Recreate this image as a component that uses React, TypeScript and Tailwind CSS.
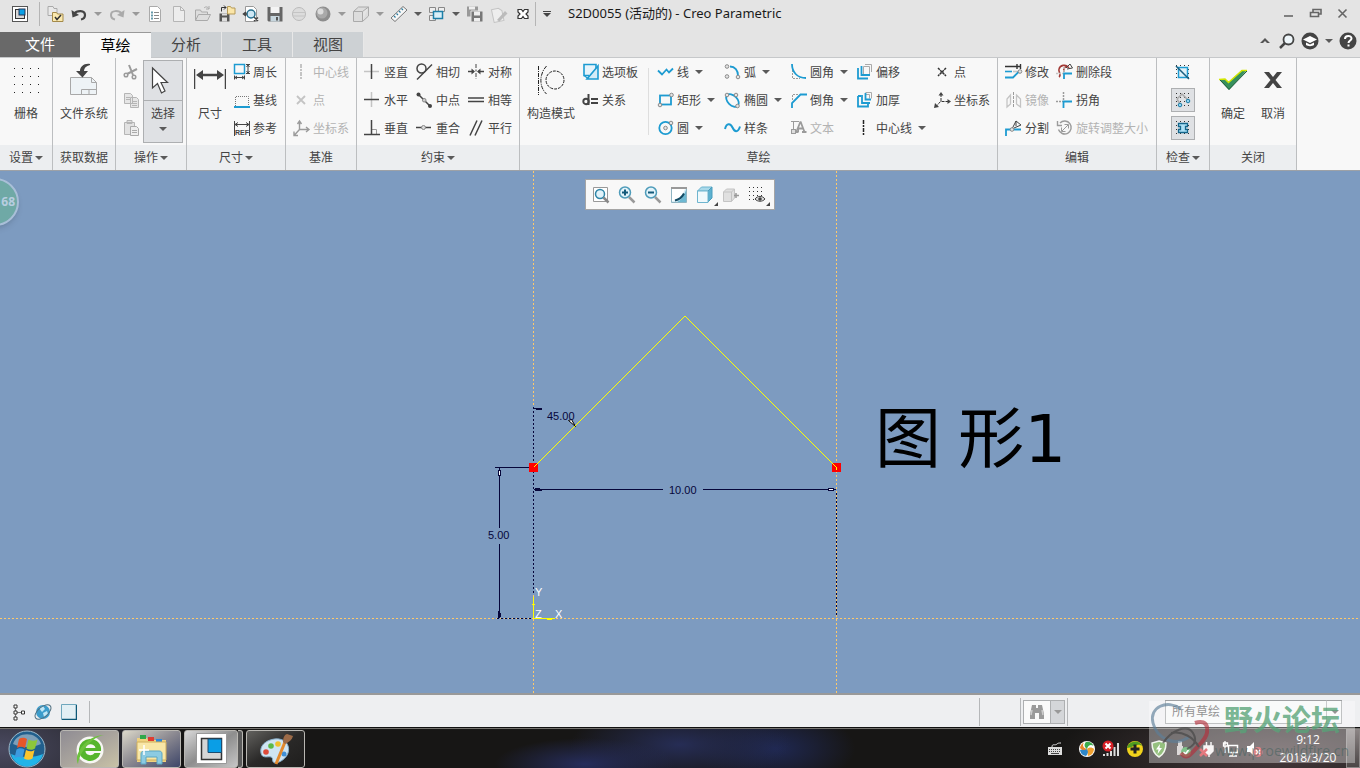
import { useState, type ReactNode } from 'react'
import clsx from 'clsx'

const BLUE = '#1d9bd1'
const DARK = '#444444'
const GRAY = '#9b9b9b'
const PALE = '#c4c4c4'

function Svg({ size = 18, h, children }: { size?: number; h?: number; children: ReactNode }) {
  return (
    <svg
      width={size}
      height={h ?? size}
      viewBox={`0 0 ${size} ${h ?? size}`}
      fill="none"
      className="shrink-0"
      aria-hidden="true"
    >
      {children}
    </svg>
  )
}

function Caret({ color = '#5a5a5a' }: { color?: string }) {
  return (
    <svg width="8" height="4" viewBox="0 0 8 4" className="shrink-0" aria-hidden="true">
      <path d="M0 0h8L4 4z" fill={color} />
    </svg>
  )
}

/* ---------- 18px ribbon icons ---------- */

const node = (x: number, y: number) => (
  <circle key={`${x}-${y}`} cx={x} cy={y} r="1.8" fill="#e4e4e4" stroke="#8a8a8a" />
)

const icons: Record<string, ReactNode> = {
  perimeter: (
    <>
      <rect x="1.5" y="1.5" width="10" height="9" stroke={BLUE} strokeWidth="1.5" />
      <path d="M13 1.5h4M13 10.5h4M15 2v8M13.5 4L15 2l1.5 2M13.5 8l1.5 2 1.5-2" stroke={DARK} />
      <path d="M1.5 12.5v4M11.5 12.5v4M2 14.5h9M4 13l-2 1.5L4 16M9 13l2 1.5L9 16" stroke={DARK} />
    </>
  ),
  baseline: (
    <>
      <path d="M2.5 15V5.5h13V15" stroke="#777" strokeDasharray="1 1" />
      <path d="M1 16h16" stroke={BLUE} strokeWidth="2" />
    </>
  ),
  ref: (
    <>
      <path d="M1.5 2v15M16.5 2v15M2 5.5h14M5 3.5l-3 2 3 2M13 3.5l3 2-3 2" stroke={DARK} />
      <text x="9" y="16" textAnchor="middle" fontSize="7" fontWeight="700" fill={DARK} fontFamily="Liberation Sans, sans-serif">
        REF
      </text>
    </>
  ),
  centerDisabled: <path d="M8 1v16" stroke={PALE} strokeWidth="2" strokeDasharray="4 1 2 1" />,
  pointDisabled: <path d="M4 5l8 8M12 5l-8 8" stroke={PALE} strokeWidth="1.8" />,
  csysDisabled: (
    <path d="M6.5 2v8.5h9M6.5 10.5L1.5 16M4.5 5l2-3 2 3M13 8l3 2.5-3 2.5M1 12.5v4h4" stroke={GRAY} strokeWidth="1.4" />
  ),
  vertical: (
    <>
      <path d="M0 8.5h15" stroke={PALE} strokeWidth="1.5" />
      <path d="M7.5 1v15" stroke={DARK} strokeWidth="1.5" />
    </>
  ),
  horizontal: (
    <>
      <path d="M7.5 1v15" stroke={PALE} strokeWidth="1.5" />
      <path d="M0 8.5h15" stroke={DARK} strokeWidth="1.5" />
    </>
  ),
  perpendicular: (
    <>
      <path d="M8 10.5h4.5V15" stroke={GRAY} />
      <path d="M7.5 1v14M0 15.5h16" stroke={DARK} strokeWidth="1.5" />
    </>
  ),
  tangent: (
    <>
      <circle cx="5.5" cy="5.5" r="4.5" stroke={DARK} strokeWidth="1.5" />
      <path d="M1 16.5l15-15" stroke={DARK} strokeWidth="1.5" />
    </>
  ),
  midpoint: (
    <>
      <path d="M2 3l12 12" stroke={DARK} strokeWidth="1.5" />
      <circle cx="2.5" cy="3.5" r="2" fill={DARK} />
      <circle cx="14" cy="15" r="2" fill={DARK} />
      <circle cx="8.2" cy="9.2" r="1.8" fill="#ccc" stroke="#888" />
    </>
  ),
  coincident: (
    <>
      <path d="M0 8.5h15" stroke={DARK} strokeWidth="1.5" />
      <circle cx="7.5" cy="8.5" r="2" fill="#ddd" stroke="#888" />
    </>
  ),
  symmetric: (
    <>
      <path d="M8 1v15" stroke={DARK} strokeDasharray="4 1.5 2 1.5" />
      <path d="M0 8.5h6M16 8.5h-6" stroke={DARK} strokeWidth="1.5" />
      <path d="M3.5 5.5L7 8.5l-3.5 3zM12.5 5.5L9 8.5l3.5 3z" fill={DARK} />
    </>
  ),
  equal: <path d="M0 7h16M0 10.5h16" stroke={DARK} strokeWidth="1.5" />,
  parallel: <path d="M2 16.5l7-15M7 16.5l7-15" stroke={DARK} strokeWidth="1.5" />,
  palette: (
    <>
      <path d="M1.5 1.5h12v12h-12z" fill="#e7f4fb" />
      <path d="M14 6V1.500h-12v11h5" stroke={BLUE} strokeWidth="1.6" />
      <path d="M16 3v13H5z" fill="#d5ecf7" stroke={BLUE} strokeWidth="1.6" />
      <path d="M2 12.500l4 3" stroke={BLUE} strokeWidth="1.2" />
    </>
  ),
  relation: (
    <>
      <path d="M6.5 3v11" stroke={DARK} strokeWidth="2" />
      <circle cx="4" cy="10.500" r="2.700" stroke={DARK} strokeWidth="1.9" />
      <path d="M9 8h7M9 12h7" stroke={DARK} strokeWidth="2" />
    </>
  ),
  line: <path d="M1 7.5l4 4 4.500-5 2.500 3 4-4" stroke={BLUE} strokeWidth="1.8" />,
  rect: (
    <>
      <rect x="3" y="4.5" width="11" height="9" stroke={BLUE} strokeWidth="1.8" />
      {node(14.5, 4)}
      {node(3, 14)}
    </>
  ),
  circle: (
    <>
      <circle cx="8.5" cy="9" r="6.2" stroke={BLUE} strokeWidth="1.8" />
      {node(8.5, 9)}
      {node(14, 4)}
    </>
  ),
  arc: (
    <>
      <path d="M6 3.5c5 0 8 4 8 9" stroke={BLUE} strokeWidth="1.8" />
      {node(3, 3.5)}
      {node(3, 13.5)}
      {node(14, 14)}
    </>
  ),
  ellipse: (
    <>
      <ellipse cx="8.5" cy="9.5" rx="7.5" ry="4.8" transform="rotate(45 8.5 9.5)" stroke={BLUE} strokeWidth="1.8" />
      {node(3, 4)}
      {node(12, 4)}
      {node(13.5, 15)}
    </>
  ),
  spline: <path d="M1 10c1.5-6 5.500-6 7.500-1.500S14 14 16 7.500" stroke={BLUE} strokeWidth="2" />,
  fillet: (
    <>
      <path d="M2.5 7v8.5H10" stroke={GRAY} strokeDasharray="2 1" />
      <path d="M2 1c0 8 5 14 14 14" stroke={BLUE} strokeWidth="1.8" />
    </>
  ),
  chamfer: (
    <>
      <path d="M2.5 9V3.5H9" stroke={GRAY} strokeDasharray="2 1" />
      <path d="M2 17v-5l8.500-8.500H17" stroke={BLUE} strokeWidth="1.8" />
    </>
  ),
  text: (
    <>
      <path d="M1 2.5h8M3.5 3v8M8.5 10v3" stroke={GRAY} />
      <path d="M10.5 2.500l-4 10M10.500 2.500l4 10.500M8 9.500h5M5 13h3.500M12 13h4.500" stroke={GRAY} strokeWidth="1.8" />
      <rect x="1.5" y="10.5" width="4" height="4" fill="#ddd" stroke={GRAY} />
    </>
  ),
  offset: (
    <>
      <path d="M7.5 3.500h6v8h-6zM9 1.500h6.500V9" stroke="#aaa" />
      <path d="M2 5v10.500h10M5.500 3v9H14" stroke={BLUE} strokeWidth="1.8" />
    </>
  ),
  thicken: (
    <>
      <path d="M9.5 1.5h6v6M9.500 3.500h4v4" stroke="#aaa" />
      <path d="M2 5v10.500h10v-3M2 5h3" stroke={BLUE} strokeWidth="1.8" />
      <path d="M6 4v8h8M9.500 2v6.500H15" stroke={BLUE} strokeWidth="1.8" />
    </>
  ),
  centerline: <path d="M7.5 1v16" stroke="#222" strokeWidth="1.500" strokeDasharray="4 1 2 1" />,
  point: <path d="M4 5l8 8M12 5l-8 8" stroke="#333" strokeWidth="1.5" strokeDasharray="2.5 .6" />,
  csys: (
    <>
      <path d="M7 3v7.5h7M6.5 10.5l-4 4.500" stroke="#333" strokeDasharray="3 1" />
      <path d="M7 1L4.500 4.500h5zM17 10.500L13.500 8v5zM0 17l1-5 4 4z" fill="#444" />
    </>
  ),
  modify: (
    <>
      <path d="M0 3.5h15M12 1v5M15.5 1v5" stroke="#333" strokeWidth="1.4" />
      <path d="M0 8.5h7" stroke={BLUE} strokeWidth="1.6" />
      <path d="M8 8.5h7" stroke={PALE} strokeWidth="1.6" />
      <path d="M0 14.5h8l6-6" stroke={BLUE} strokeWidth="1.8" />
      {node(15, 8.5)}
    </>
  ),
  mirror: (
    <>
      <path d="M8.5 1v16" stroke={GRAY} strokeDasharray="3 1" />
      <path d="M5.5 4L2 8v8l3.500-3zM11.500 4l4 4v8l-4-3z" stroke={PALE} strokeWidth="1.3" />
    </>
  ),
  divide: (
    <>
      <path d="M1 17v-6.500h15" stroke={BLUE} strokeWidth="1.8" />
      <path d="M7 10l4-8 5 4-7 3M11 2v5" stroke={DARK} />
      {node(7, 10.5)}
    </>
  ),
  deleteSegment: (
    <>
      <path d="M3 14c3-2-1-5 0-8 1-4 7-5 9-2-3-1-5 1-4 5" stroke="#a33a36" strokeWidth="1.6" />
      <path d="M10 5l4-4 2.500 4L11 6" stroke={DARK} />
      <path d="M0 10.500h7M8 4v5" stroke={PALE} strokeWidth="1.5" strokeDasharray="2 1" />
      <path d="M16 10.500H8V16" stroke={BLUE} strokeWidth="1.8" />
    </>
  ),
  corner: (
    <>
      <path d="M0 10.500h7M7.500 1v8" stroke={GRAY} strokeWidth="1.5" strokeDasharray="2 1" />
      <path d="M16 10.500H7.500V17" stroke={BLUE} strokeWidth="1.8" />
    </>
  ),
  rotate: (
    <>
      <path d="M4 4a6.500 6.500 0 1 1-1.500 6.500M1.500 2v4.500H6" stroke={GRAY} strokeWidth="1.4" />
      <path d="M6 12l6-6M8.500 5.500h4v4M5.500 8.500v4h4" stroke={GRAY} />
    </>
  ),
}

interface ToolProps {
  icon: string
  label: string
  arrow?: boolean
  disabled?: boolean
}

function Tool({ icon, label, arrow, disabled }: ToolProps) {
  return (
    <button
      type="button"
      disabled={disabled}
      className="flex h-7 items-center gap-0.5 whitespace-nowrap text-left text-[#444] disabled:text-[#b3b3b3]"
    >
      <Svg>{icons[icon]}</Svg>
      <span className="pt-0.5">{label}</span>
      {arrow && (
        <span className="ml-1">
          <Caret />
        </span>
      )}
    </button>
  )
}

function Column({ tools, className }: { tools: ToolProps[]; className?: string }) {
  return (
    <div className={clsx('flex shrink-0 flex-col items-start', className)}>
      {tools.map((t) => (
        <Tool key={t.label} {...t} />
      ))}
    </div>
  )
}

function BigTool({ label, className, children }: { label: string; className?: string; children: ReactNode }) {
  return (
    <button type="button" className={clsx('flex shrink-0 flex-col items-center whitespace-nowrap', className)}>
      <span className="flex h-11 items-center">{children}</span>
      <span className="h-6 leading-6">{label}</span>
    </button>
  )
}

interface GroupProps {
  title: string
  arrow?: boolean
  className?: string
  children: ReactNode
}

function Group({ title, arrow, className, children }: GroupProps) {
  return (
    <section className={clsx('flex shrink-0 flex-col border-r border-[#bcbec0]', className)}>
      <div className="flex h-[87px]">{children}</div>
      <div className="flex h-[25px] items-center justify-center gap-0.5 bg-[#eceef0]">
        {title}
        {arrow && <Caret />}
      </div>
    </section>
  )
}

/* ---------- title bar ---------- */

function QuickButton({ label, children }: { label: string; children: ReactNode }) {
  return (
    <button type="button" aria-label={label} className="flex h-7 w-6 shrink-0 items-center justify-center">
      <Svg>{children}</Svg>
    </button>
  )
}

function QuickArrow({ color }: { color?: string }) {
  return (
    <button type="button" aria-label="更多" className="flex h-7 w-3.5 shrink-0 items-center justify-center">
      <Caret color={color} />
    </button>
  )
}

function TitleBar() {
  return (
    <header className="flex h-8 items-center overflow-hidden pb-1">
      <div className="flex h-6 w-10 items-center justify-center border-r border-[#b5b5b5]">
        <Svg size={16}>
          <rect x=".5" y=".5" width="15" height="15" fill="#fff" stroke="#555" />
          <rect x="3.5" y="3.5" width="9" height="9" fill="#d8d8d8" stroke="#333" />
          <rect x="7" y="3" width="6" height="6" fill="#0aa0e6" stroke="#235" />
        </Svg>
      </div>
      <span className="w-[3px]" />
      <QuickButton label="打开会话">
        <path d="M2 1.5h5l1 2h3v7H2z" fill="#e9e9e9" stroke="#aaa" />
        <path d="M6.500 7.500h4l1 1.500h5.500v7.500H6.500z" fill="#fbe9ae" stroke="#a48a4a" />
        <path d="M9 12l2 2.500 4-4.500" stroke="#333" strokeWidth="1.5" />
      </QuickButton>
      <QuickButton label="撤消">
        <path d="M4 9c3-4 11-4 11 1 0 2-1.500 4-4 4.500" stroke="#444" strokeWidth="2.2" />
        <path d="M1.500 5l1 7.500L9 10z" fill="#444" />
      </QuickButton>
      <QuickArrow color="#999" />
      <QuickButton label="重做">
        <path d="M14 9C11 5 3 5 3 10c0 2 1.500 4 4 4.500" stroke="#aaa" strokeWidth="2" />
        <path d="M16.500 5l-1 7.500L9 10z" fill="#aaa" />
      </QuickButton>
      <QuickArrow color="#999" />
      <QuickButton label="属性">
        <path d="M3.500 1.500h8l3 3v12h-11z" fill="#fff" stroke="#aaa" />
        <path d="M8 7.500h5M8 10.500h5M8 13.500h5" stroke="#888" />
        <path d="M5 6.500h2v2H5zM5 9.500h2v2H5zM5 12.500h2v2H5z" fill="#69a" />
      </QuickButton>
      <QuickButton label="新建">
        <path d="M3.500 1.500h7l4 4v11h-11z" fill="#ededed" stroke="#b5b5b5" />
        <path d="M10.500 1.500v4h4" stroke="#b5b5b5" />
      </QuickButton>
      <QuickButton label="打开">
        <path d="M1.500 15V5h5l1 2h6v3" fill="#ddd" stroke="#aaa" />
        <path d="M1.500 15.500l3-6h12l-3 6z" fill="#ddd" stroke="#aaa" />
        <path d="M10 3c2-2 4-1 5 1m0-3v3h-3" stroke="#aaa" />
      </QuickButton>
      <QuickButton label="保存副本">
        <path d="M1.500 8.500h10v8h-10z" fill="#555" />
        <path d="M4 12.500h5v4H4zM4 8.500h5v2H4z" fill="#ddd" />
        <path d="M3.500 6.500v-4H8M6 .5l2 2-2 2" stroke="#333" />
        <path d="M9.500 1.500h3l1 1.500h3.500v6H9.500z" fill="#fbe6a8" stroke="#b59a58" />
      </QuickButton>
      <QuickButton label="拭除未显示的">
        <path d="M3.500 1.500h8l3 3v12h-11z" fill="#fff" stroke="#999" />
        <circle cx="9" cy="9" r="4" fill="#cfe8f5" stroke="#26708f" strokeWidth="1.5" />
        <path d="M1 9h4M4 7L1.500 9 4 11M12 12l4 4M16 12.500L12 16" stroke="#444" strokeWidth="1.5" />
      </QuickButton>
      <QuickButton label="保存">
        <path d="M1.500 2h15v14.500h-14l-1-1z" fill="#666" />
        <path d="M4.500 2h9v6h-9z" fill="#f4f4f4" />
        <path d="M4.500 11h9v5.500h-9z" fill="#c7d6de" />
        <path d="M10 12h2v3.500h-2z" fill="#555" />
      </QuickButton>
      <QuickButton label="线框">
        <circle cx="9" cy="9" r="6.500" fill="#dcdcdc" stroke="#bbb" />
        <path d="M3 7.500h12M3 11h12" stroke="#c4c4c4" />
      </QuickButton>
      <QuickButton label="着色">
        <circle cx="9" cy="9" r="7.500" fill="#8d8d8d" />
        <circle cx="8" cy="8" r="5.500" fill="#a9a9a9" />
        <circle cx="6.500" cy="6.500" r="3" fill="#dcdcdc" />
      </QuickButton>
      <QuickArrow color="#999" />
      <QuickButton label="视图">
        <path d="M1.500 6.500h9v10h-9zM1.500 6.500l5-4.500h10l-6 4.500M16.500 2v9l-6 5.500" fill="#ddd" stroke="#aaa" />
      </QuickButton>
      <QuickArrow color="#999" />
      <QuickButton label="测量">
        <path d="M1 13L13 1.500 17 5 5 16.500z" fill="#f7f7f7" stroke="#777" />
        <path d="M4 11l1.500 1.500M6.500 8.500L8 10M9 6l1.500 1.500M11.500 3.500L13 5" stroke="#2c7c9e" strokeWidth="1.2" />
      </QuickButton>
      <QuickArrow />
      <QuickButton label="窗口">
        <path d="M1.500 2.500h6v5h-6zM10.500 2.500h6v4h-6zM1.500 10.500h6v5h-6z" fill="#eee" stroke="#888" />
        <path d="M5.500 6.500h9v7h-9z" fill="#d8eff8" stroke="#1c7fa8" strokeWidth="1.5" />
      </QuickButton>
      <QuickArrow />
      <QuickButton label="全部保存">
        <path d="M1 1.500h11v10H1z" fill="#999" />
        <path d="M3 1.500h6v3H3z" fill="#eee" />
        <path d="M5 6h12v11H5z" fill="#777" stroke="#e4e4e4" />
        <path d="M8 6.500h6v4H8zM8 13h6v3.500H8z" fill="#eee" />
      </QuickButton>
      <QuickButton label="编辑注释">
        <path d="M2.500 3.500h7l3 3v10h-10z" fill="#eee" stroke="#c4c4c4" transform="rotate(-12 8 9)" />
        <path d="M7 15l8-9 2.500 2.500-8 8z" fill="#bbb" />
      </QuickButton>
      <QuickButton label="关闭窗口">
        <path
          d="M4 4.500h3.500l1.500 2 1.500-2H14V7l-2 2 2 2v2.500h-3.500l-1.500-2-1.500 2H4V11l2-2-2-2z"
          fill="#fff"
          stroke="#333"
          strokeWidth="1.2"
        />
      </QuickButton>
      <span className="h-6 w-px bg-[#b5b5b5]" />
      <button type="button" aria-label="自定义快速访问工具栏" className="flex h-7 w-[22px] flex-col items-center justify-center gap-px">
        <span className="h-px w-2 bg-[#444]" />
        <Caret color="#444" />
      </button>
      <h1 className="ml-2.5 whitespace-nowrap font-['Noto_Sans','Noto_Sans_CJK_SC',sans-serif] text-[13px] text-[#1a1a1a]">
        S2D0055 (活动的) - Creo Parametric
      </h1>
      <div className="ml-auto flex pr-1">
        {[
          ['最小化', 'M4 11h9'],
          ['还原', 'M6 7V4.5h8V9h-2M3.5 7.500h8v4h-8z'],
          ['关闭', 'M4.500 4.500l8 8M12.500 4.500l-8 8'],
        ].map(([name, d]) => (
          <button key={name} type="button" aria-label={name} className="flex h-7 w-[27px] items-center justify-center">
            <Svg>
              <path d={d} stroke="#666" strokeWidth="1.6" />
            </Svg>
          </button>
        ))}
      </div>
    </header>
  )
}

const tabs = ['文件', '草绘', '分析', '工具', '视图']

function TabRow() {
  const [active, setActive] = useState('草绘')

  return (
    <nav className="flex h-[26px] border-b border-[#c6c8ca] text-[15px]">
      {tabs.map((tab) => (
        <button
          key={tab}
          type="button"
          onClick={() => setActive(tab)}
          className={clsx(
            'h-[25px] shrink-0 leading-[25px]',
            tab === '文件' && 'w-20 bg-[#696969] text-white',
            tab !== '文件' && tab === active && 'h-[26px] w-[71px] border-t border-[#999] bg-[#f8f8f8] text-black',
            tab !== '文件' && tab !== active && 'w-[71px] border-r border-[#e8e8e8] bg-[#cdd1d4] text-[#444]',
          )}
        >
          {tab}
        </button>
      ))}
      <div className="ml-auto flex items-center gap-1.5 pb-2 pr-[3px]">
        <button type="button" aria-label="最小化功能区" className="mr-0.5">
          <Svg size={12}>
            <path d="M1 8l5-5 5 5H8L6 6 4 8z" fill="#555" />
          </Svg>
        </button>
        <button type="button" aria-label="搜索">
          <Svg size={16}>
            <circle cx="9.5" cy="6.5" r="5" fill="#eef6fa" stroke={DARK} strokeWidth="1.8" />
            <path d="M6 10l-5 5" stroke={DARK} strokeWidth="2.5" />
          </Svg>
        </button>
        <button type="button" aria-label="学习中心" className="flex items-center gap-1.5">
          <Svg size={18}>
            <circle cx="9" cy="9" r="8.5" fill={DARK} />
            <path d="M2 7.500L9 4l7 3.500L9 11z" fill="#fff" />
            <path d="M5 10.500v2.500c2 1.500 6 1.500 8 0v-2.500l-4 2z" fill="#fff" />
          </Svg>
          <Caret />
        </button>
        <button type="button" aria-label="帮助">
          <Svg size={18}>
            <circle cx="9" cy="9" r="8.5" fill={DARK} />
            <path d="M6 7c0-4 6.500-4 6.500-.5 0 2-3 2-3 4.500M9.500 12.500v2" stroke="#fff" strokeWidth="2" />
          </Svg>
        </button>
      </div>
    </nav>
  )
}

/* ---------- ribbon ---------- */

const gridDots = [1, 9, 17, 25].flatMap((x) => [1, 9, 17, 25].map((y) => ({ x, y })))

function SmallDots() {
  return (
    <path
      d="M2 2.500h15M2 6.500h15M2 10.500h15M2 14.500h15"
      stroke="#333"
      strokeDasharray="1 3"
    />
  )
}

function Ribbon() {
  return (
    <div className="flex h-[113px] overflow-hidden border-b border-[#9da1a6] bg-[#f8f8f8] text-[12px] text-[#444]">
      <Group title="设置" arrow className="w-[53px]">
        <BigTool label="栅格" className="w-full">
          <Svg size={27}>
            {gridDots.map((d) => (
              <rect key={`${d.x}-${d.y}`} x={d.x} y={d.y} width="1" height="1" fill="#222" />
            ))}
          </Svg>
        </BigTool>
      </Group>

      <Group title="获取数据" className="w-[63px]">
        <BigTool label="文件系统" className="w-full">
          <Svg size={30} h={34}>
            <path d="M1.5 14.500h21l5 5v12h-26z" fill="#eef3f6" stroke="#a8a8a8" />
            <path d="M22.500 14.500v5h5M12.500 31v-4.500h15M20 27v4" stroke="#a8a8a8" />
            <path d="M21 1c-6-1-10 3-10 7H7l6.500 6.500L19 8h-4c0-3 2-5 6-6z" fill="#444" />
          </Svg>
        </BigTool>
      </Group>

      <Group title="操作" arrow className="w-[71px]">
        <div className="flex w-[27px] flex-col items-end pr-[3px]">
          <button type="button" disabled aria-label="剪切" className="flex h-7 items-center">
            <Svg>
              <path d="M7 2l4 10M15 6L5 11" stroke={GRAY} strokeWidth="2" />
              <circle cx="4" cy="12" r="1.8" stroke={GRAY} strokeWidth="1.5" />
              <circle cx="12" cy="14" r="1.8" stroke={GRAY} strokeWidth="1.5" />
            </Svg>
          </button>
          <button type="button" disabled aria-label="复制" className="flex h-7 items-center">
            <Svg>
              <path d="M2.500 2.500h6l2 2v8h-8zM8.500 6.500h6l2 2v8h-8z" fill="#e6e6e6" stroke="#b5b5b5" />
              <path d="M4 6.500h4M4 8.500h4M10 10.500h5M10 12.500h5M10 14.500h5" stroke="#b5b5b5" />
            </Svg>
          </button>
          <button type="button" disabled aria-label="粘贴" className="flex h-7 items-center">
            <Svg>
              <path d="M2.500 3.500h10v12h-10zM5 1.500h5v3H5z" fill="#e2e2e2" stroke="#b5b5b5" />
              <path d="M8.500 7.500h6l2 2v7h-8z" fill="#eee" stroke="#aaa" />
              <path d="M10 11.500h5M10 13.500h5" stroke="#aaa" />
            </Svg>
          </button>
        </div>
        <button
          type="button"
          className="mt-0.5 flex h-[83px] w-10 flex-col items-center border border-[#adafb1] bg-[#dfe1e4]"
        >
          <span className="flex h-10 w-full items-center border-b border-[#adafb1] pl-1.5">
            <Svg size={20} h={30}>
              <path d="M2.500 2v20l5-4.500 4 9.500 3.500-2-4-8.500h6.500z" fill="#fff" stroke={DARK} strokeWidth="1.2" />
            </Svg>
          </span>
          <span className="h-[26px] leading-[26px]">选择</span>
          <Caret />
        </button>
      </Group>

      <Group title="尺寸" arrow className="w-[99px]">
        <BigTool label="尺寸" className="w-[46px]">
          <Svg size={32} h={34}>
            <path d="M.5 6v20M31.500 6v20" stroke={DARK} strokeWidth="1.5" />
            <path d="M6 12h20" stroke={DARK} strokeWidth="2.500" />
            <path d="M2 12l7-5v10zM30 12l-7-5v10z" fill={DARK} />
          </Svg>
        </BigTool>
        <Column
          tools={[
            { icon: 'perimeter', label: '周长' },
            { icon: 'baseline', label: '基线' },
            { icon: 'ref', label: '参考' },
          ]}
        />
      </Group>

      <Group title="基准" className="w-[71px]">
        <Column
          className="pl-[7px]"
          tools={[
            { icon: 'centerDisabled', label: '中心线', disabled: true },
            { icon: 'pointDisabled', label: '点', disabled: true },
            { icon: 'csysDisabled', label: '坐标系', disabled: true },
          ]}
        />
      </Group>

      <Group title="约束" arrow className="w-[163px]">
        <div className="flex pl-[7px]">
          <Column
            className="w-[52px]"
            tools={[
              { icon: 'vertical', label: '竖直' },
              { icon: 'horizontal', label: '水平' },
              { icon: 'perpendicular', label: '垂直' },
            ]}
          />
          <Column
            className="w-[52px]"
            tools={[
              { icon: 'tangent', label: '相切' },
              { icon: 'midpoint', label: '中点' },
              { icon: 'coincident', label: '重合' },
            ]}
          />
          <Column
            tools={[
              { icon: 'symmetric', label: '对称' },
              { icon: 'equal', label: '相等' },
              { icon: 'parallel', label: '平行' },
            ]}
          />
        </div>
      </Group>

      <Group title="草绘" className="w-[478px]">
        <BigTool label="构造模式" className="w-[62px]">
          <Svg size={28} h={30}>
            <path d="M1.500 1v29" stroke="#222" strokeDasharray="4 1 1 1" />
            <path d="M9.500 1C2 9 2 22 9.500 29" stroke="#222" strokeDasharray="4 1 1 1" />
            <circle cx="18" cy="15" r="9" stroke="#222" strokeDasharray="3 1" />
          </Svg>
        </BigTool>
        <Column
          className="w-[66px]"
          tools={[
            { icon: 'palette', label: '选项板' },
            { icon: 'relation', label: '关系' },
          ]}
        />
        <div className="mr-2 mt-2.5 h-[67px] w-px shrink-0 bg-[#dedede]" />
        <Column
          className="w-[67px]"
          tools={[
            { icon: 'line', label: '线', arrow: true },
            { icon: 'rect', label: '矩形', arrow: true },
            { icon: 'circle', label: '圆', arrow: true },
          ]}
        />
        <Column
          className="w-[66px]"
          tools={[
            { icon: 'arc', label: '弧', arrow: true },
            { icon: 'ellipse', label: '椭圆', arrow: true },
            { icon: 'spline', label: '样条' },
          ]}
        />
        <Column
          className="w-[66px]"
          tools={[
            { icon: 'fillet', label: '圆角', arrow: true },
            { icon: 'chamfer', label: '倒角', arrow: true },
            { icon: 'text', label: '文本', disabled: true },
          ]}
        />
        <Column
          className="w-[78px]"
          tools={[
            { icon: 'offset', label: '偏移' },
            { icon: 'thicken', label: '加厚' },
            { icon: 'centerline', label: '中心线', arrow: true },
          ]}
        />
        <Column
          tools={[
            { icon: 'point', label: '点' },
            { icon: 'csys', label: '坐标系' },
          ]}
        />
      </Group>

      <Group title="编辑" className="w-[159px]">
        <div className="flex pl-[7px]">
          <Column
            className="w-[51px]"
            tools={[
              { icon: 'modify', label: '修改' },
              { icon: 'mirror', label: '镜像', disabled: true },
              { icon: 'divide', label: '分割' },
            ]}
          />
          <Column
            tools={[
              { icon: 'deleteSegment', label: '删除段' },
              { icon: 'corner', label: '拐角' },
              { icon: 'rotate', label: '旋转调整大小', disabled: true },
            ]}
          />
        </div>
      </Group>

      <Group title="检查" arrow className="w-[53px]">
        <div className="flex w-full flex-col items-center gap-1 pt-0.5">
          <button type="button" aria-label="重叠几何" className="flex size-6 items-center justify-center">
            <Svg size={18}>
              <SmallDots />
              <rect x="4.5" y="4.5" width="9" height="10" fill="#dff1f8" stroke={BLUE} strokeWidth="1.5" />
              <path d="M2 3l13 13" stroke="#1a5f80" strokeWidth="1.5" />
            </Svg>
          </button>
          <button
            type="button"
            aria-label="突出显示开放端"
            className="flex size-6 items-center justify-center border border-[#adafb1] bg-[#dfe1e4]"
          >
            <Svg size={18}>
              <SmallDots />
              <path d="M3 8l5-5 6 6M3 8l3 5" stroke="#aaa" strokeWidth="1.5" />
              <circle cx="6" cy="14" r="1.8" fill="#8fd4f2" stroke="#1a7ba5" />
              <circle cx="14" cy="10" r="1.8" fill="#8fd4f2" stroke="#1a7ba5" />
            </Svg>
          </button>
          <button
            type="button"
            aria-label="着色封闭环"
            className="flex size-6 items-center justify-center border border-[#adafb1] bg-[#dfe1e4]"
          >
            <Svg size={18}>
              <SmallDots />
              <path d="M4.500 4.500h9v3h-2v3h2v3h-9v-3h2v-3h-2z" fill="#aee2f7" stroke="#13668c" strokeWidth="1.3" />
            </Svg>
          </button>
        </div>
      </Group>

      <Group title="关闭" className="w-[87px]">
        <div className="flex pl-[3px]">
          <BigTool label="确定" className="w-10">
            <Svg size={30} h={22}>
              <path d="M1 10h6l4 3L24 1h5L11 21z" fill="#36905c" />
              <path d="M1 10.500l6-.5 3.500 3.500L24 1.500h5" stroke="#d2e600" strokeWidth="1.5" />
              <path d="M29 2L11 20.500 2 11" stroke="#1d5a38" />
            </Svg>
          </BigTool>
          <BigTool label="取消" className="w-10">
            <Svg size={20} h={18}>
              <path d="M1 1h5l4 5 4-5h5l-6.500 8 6.500 8h-5l-4-5-4 5H1l6.500-8z" fill={DARK} />
            </Svg>
          </BigTool>
        </div>
      </Group>
    </div>
  )
}

/* ---------- sketch canvas ---------- */

const viewTools: { name: string; icon: ReactNode }[] = [
  {
    name: '重新调整',
    icon: (
      <>
        <path d="M1.5 1.5h14v14h-14z" fill="#fff" stroke="#999" />
        <circle cx="8" cy="8" r="4.5" fill="#e2f3fa" stroke="#2f86a8" strokeWidth="1.5" />
        <path d="M11.500 11.500l5 5" stroke="#888" strokeWidth="2.500" />
      </>
    ),
  },
  {
    name: '放大',
    icon: (
      <>
        <circle cx="7" cy="6.5" r="5.5" fill="#e2f3fa" stroke="#4f9cba" strokeWidth="1.5" />
        <path d="M4 6.500h6M7 3.500v6" stroke="#13597a" strokeWidth="2" />
        <path d="M11 11l5.500 5.500" stroke="#999" strokeWidth="2.5" />
      </>
    ),
  },
  {
    name: '缩小',
    icon: (
      <>
        <circle cx="7" cy="6.5" r="5.5" fill="#e2f3fa" stroke="#4f9cba" strokeWidth="1.5" />
        <path d="M4 6.500h6" stroke="#13597a" strokeWidth="2" />
        <path d="M11 11l5.500 5.500" stroke="#999" strokeWidth="2.5" />
      </>
    ),
  },
  {
    name: '重画',
    icon: (
      <>
        <path d="M1.5 1.5h15v15h-15z" fill="#d7ecf4" stroke="#8fb4c2" />
        <path d="M2 3h13c-3 7-7 11-13 12z" fill="#fff" />
        <path d="M16 4v12H7c4-2 7-6 9-12z" fill="#6db8d2" />
        <path d="M5 14.500c4-1 7-3 9-7" stroke="#134a63" strokeWidth="2" />
        <path d="M1 2h16" stroke="#999" strokeWidth="2" />
      </>
    ),
  },
  {
    name: '显示样式',
    icon: (
      <>
        <path d="M1.500 5l4-4H16l-4 4z" fill="#a9d9ea" stroke="#6fb5cf" />
        <path d="M12 5l4-4v11l-4 4z" fill="#5cb1d0" stroke="#4a9dbd" />
        <path d="M1.500 5H12v11.500H1.500z" fill="#f0f9fc" stroke="#6fb5cf" />
      </>
    ),
  },
  {
    name: '已保存方向',
    icon: (
      <>
        <path d="M1.500 6l3-3h8v9l-3 3.500h-8z" fill="#e0e0e0" stroke="#c4c4c4" />
        <path d="M1.500 6h8v9.500M9.500 6l3-3" stroke="#c4c4c4" />
        <path d="M12 9.500h5M14 7v5" stroke="#999" strokeWidth="1.5" />
      </>
    ),
  },
  {
    name: '草绘器显示',
    icon: (
      <>
        <path d="M1 1.500h14M1 5.500h14M1 9.500h14M1 13.500h5" stroke="#333" strokeDasharray="1 3" />
        <path d="M7 13c2.500-3.500 7.500-3.500 10 0-2.500 3-7.500 3-10 0z" fill="#ddd" stroke={DARK} />
        <circle cx="12" cy="13" r="1.800" fill={DARK} />
      </>
    ),
  },
]

function ViewToolbar() {
  return (
    <div className="absolute left-1/2 top-2 flex h-[31px] -translate-x-1/2 items-center border border-[#a5a5a5] bg-[#f8f8f8] pl-0.5 pr-1">
      {viewTools.map((t, i) => (
        <button key={t.name} type="button" aria-label={t.name} className="relative flex w-[26px] items-end justify-center">
          <Svg>{t.icon}</Svg>
          {(i === 4 || i === 6) && (
            <span className="absolute -bottom-0.5 right-0">
              <Svg size={4}>
                <path d="M4 0v4H0z" fill={DARK} />
              </Svg>
            </span>
          )}
        </button>
      ))}
    </div>
  )
}

function SketchCanvas() {
  return (
    <main className="relative min-h-[480px] flex-1 overflow-hidden bg-[#7d9bc0]">
      <svg className="absolute inset-0 h-full w-full" shapeRendering="crispEdges" role="img" aria-label="草绘">
        {/* reference lines */}
        <g stroke="#ffc969" strokeDasharray="2 2">
          <path d="M533.5 0v2000" />
          <path d="M836.5 0v2000" />
          <path d="M0 447.5h4000" />
        </g>
        <path
          d="M533.5 234v190M836.5 320v124M495 447.5h38"
          stroke="#06063a"
          strokeDasharray="2 2"
          strokeDashoffset="2"
        />

        {/* dimensions */}
        <g stroke="#06063a">
          <path d="M495 296.5h38M499.5 297v60M499.5 373v74" />
          <path d="M534 318.5h129M703 318.5h133" />
          <path d="M534 237.5h8M536 238.5h6M535 319.5h7M535 317.5h5M498.5 440v7M500.5 442v4" />
          <rect x="828.5" y="317.5" width="5" height="2" fill="#fff" />
          <rect x="498.5" y="299.5" width="2" height="5" fill="#fff" />
        </g>
        <path d="M568.500 249.500l3-1 4 7z" fill="#fff" stroke="#000" shapeRendering="auto" />

        <rect x="529" y="292" width="9" height="9" fill="#f00" />
        <rect x="832" y="292" width="9" height="9" fill="#f00" />
        <line x1="533.5" y1="296.5" x2="685" y2="145" stroke="#ffff00" />
        <line x1="685" y1="145" x2="836.5" y2="296.5" stroke="#ffff00" />
        <line x1="836.5" y1="296" x2="836.5" y2="299" stroke="#ffff00" />

        {/* origin */}
        <path d="M533.5 426v21.5H555M532 433.5h3M547 448.5h5" fill="none" stroke="#ffff00" />
        <g fill="#fff" fontSize="11" fontFamily="Liberation Sans, sans-serif">
          <text x="535" y="425">Y</text>
          <text x="535" y="447">Z</text>
          <text x="555" y="447">X</text>
        </g>
        <g fill="#06063a" fontSize="11" fontFamily="Liberation Sans, sans-serif">
          <text x="547" y="249">45.00</text>
          <text x="669" y="323">10.00</text>
          <text x="488" y="368">5.00</text>
        </g>
        <text x="875" y="291" fontSize="66" fill="#000">
          图 形<tspan fontFamily="DejaVu Sans, sans-serif">1</tspan>
        </text>
      </svg>

      <ViewToolbar />

      <div className="absolute -left-[29px] top-[7px] flex size-12 items-center justify-end rounded-full border-2 border-[#a9bfd8] bg-[#6fa9a6] pr-0.5 text-[12px] font-bold text-[#b8cde0] shadow-md">
        68
      </div>
    </main>
  )
}

/* ---------- status bar ---------- */

function StatusBar() {
  return (
    <div className="flex h-[35px] items-center border-t-2 border-[#999] bg-[#eeeff1] text-[12px]">
      <button type="button" aria-label="模型树" className="ml-2.5 flex w-[18px] justify-center">
        <Svg>
          <path d="M5.500 4v11M7 9.500h6" stroke="#777" />
          <path d="M4 2h3v3H4zM4 8h3v3H4zM4 14h3v3H4zM11.500 8h3v3h-3z" fill="#fff" stroke="#333" />
        </Svg>
      </button>
      <button type="button" aria-label="浏览器" className="ml-1.5 flex w-[18px] justify-center">
        <Svg>
          <circle cx="9" cy="9" r="7" fill="#3c9ccb" />
          <path d="M5 5l4-2 2 3-3 3zM9 10l4-2 1 3-4 3z" fill="#bfe6f6" />
          <ellipse cx="9" cy="9" rx="9.5" ry="5" transform="rotate(-40 9 9)" stroke="#4f6f80" />
        </Svg>
      </button>
      <button type="button" aria-label="全屏" className="ml-2 flex w-[18px] justify-center">
        <Svg size={16}>
          <path d="M.5.5h15v15H.5z" fill="#e2eff4" stroke="#6fa7bd" />
          <path d="M1 15.500h14.500V1" stroke="#0d5877" strokeWidth="1.5" />
        </Svg>
      </button>
      <span className="ml-[11px] h-[22px] w-px bg-[#b5b7b9]" />

      <div className="ml-auto flex items-center pr-[18px]">
        <span className="h-7 w-px bg-[#b5b7b9]" />
        <span className="ml-10 h-7 w-px bg-[#b5b7b9]" />
        <button type="button" aria-label="查找" className="ml-0.5 flex h-6 w-[42px] border border-[#adafb1] bg-[#fafafa]">
          <span className="flex h-full flex-1 items-center justify-center">
            <Svg>
              <path d="M4 2h4v3h2V2h4l2 9v5h-5v-6H7v6H2v-5z" fill="#9a9a9a" />
              <path d="M4 7l-1 5M14 7l1 5" stroke="#ccc" strokeWidth="1.5" />
            </Svg>
          </span>
          <span className="flex h-full w-3.5 items-center justify-center border-l border-[#adafb1] bg-[#d4d6d9]">
            <Caret color="#999" />
          </span>
        </button>
        <span className="ml-0.5 h-7 w-px bg-[#b5b7b9]" />
        <div className="relative ml-[97px] flex">
          <select
            aria-label="选择过滤器"
            className="h-6 w-[177px] appearance-none border border-[#9fa1a3] bg-[#f6f7f8] pl-1.5 text-[12px] text-[#555]"
          >
            <option>所有草绘</option>
          </select>
          <span className="pointer-events-none absolute inset-y-0 right-0 flex w-4 items-center justify-center border-l border-[#adafb1]">
            <Caret />
          </span>
        </div>
      </div>
    </div>
  )
}

/* ---------- taskbar ---------- */

function TaskButton({ label, className, children }: { label: string; className: string; children: ReactNode }) {
  return (
    <button
      type="button"
      aria-label={label}
      className={clsx(
        'flex h-[38px] shrink-0 items-center justify-center rounded-[3px] border border-[#b9b7b2] bg-linear-to-br',
        className,
      )}
    >
      {children}
    </button>
  )
}

const trayIcons: { name: string; icon: ReactNode }[] = [
  {
    name: '360',
    icon: (
      <>
        <circle cx="9" cy="9" r="8" fill="#fff" />
        <path d="M9 9C5 8 4 5 6 2.500A7 7 0 0 0 2 8c2 3 5 3 7 1z" fill="#e8832a" />
        <path d="M9 9c1-4 4-5 6.500-3A7 7 0 0 0 8 2c-2 2-2 5 1 7z" fill="#3bab4b" />
        <path d="M9 9c-4 2-6 0-7 1a7 7 0 0 0 6 6c2-2 3-5 1-7z" fill="#2d86c9" />
        <path d="M9 9c2 4 0 5 1 7a7 7 0 0 0 6-7c-2-2-5-2-7 0z" fill="#f0a030" />
      </>
    ),
  },
  {
    name: '无线网络',
    icon: (
      <>
        <path d="M2 16v-2M5.500 16v-3M9 16v-5M12.500 16V7M16 16V3" stroke="#ddd" strokeWidth="2" />
        <circle cx="6" cy="6" r="5.5" fill="#d61f26" />
        <path d="M3.500 3.500l5 5M8.500 3.500l-5 5" stroke="#fff" strokeWidth="2" />
      </>
    ),
  },
  {
    name: '加速',
    icon: (
      <>
        <circle cx="9" cy="9" r="8" fill="#f1d21c" />
        <path d="M1 8a8 8 0 0 1 15-2C11 2 6 8 1 8z" fill="#4f9d20" />
        <path d="M4.500 9h9M9 4.500v9" stroke="#222" strokeWidth="3" />
      </>
    ),
  },
  {
    name: '安全卫士',
    icon: (
      <>
        <path d="M9 1l7 2c0 7-2 11-7 14C4 14 2 10 2 3z" fill="#5c9f3a" stroke="#e9efe4" strokeWidth="1.5" />
        <path d="M10 4L6 9.500h2.500L7.500 14 12 8H9.500z" fill="#fff" />
      </>
    ),
  },
  {
    name: '安全删除硬件',
    icon: (
      <>
        <path d="M3 6h6v9H3zM4 1h4v5H4z" fill="#c9c5c5" />
        <circle cx="12" cy="12" r="5" fill="#3ea14c" />
        <path d="M9.500 12l2 2 3-4" stroke="#fff" strokeWidth="1.5" />
      </>
    ),
  },
  {
    name: '电源',
    icon: (
      <>
        <path d="M6 6h9v5l-3 3H9l-3-3zM8.500 2v4M13 2v4M11 13v4" fill="#f4f0f0" stroke="#f4f0f0" strokeWidth="1.5" />
        <path d="M2 9l7 7M9 9l-7 7" stroke="#d6303a" strokeWidth="2.5" />
      </>
    ),
  },
  {
    name: '网络',
    icon: (
      <>
        <path d="M6.500 5.500h9v7h-9zM11 13v3M7 16h8" stroke="#fff" strokeWidth="1.5" />
        <path d="M3 1v4M1.500 3h4v3h-4zM3 6v7" stroke="#fff" strokeWidth="1.3" />
      </>
    ),
  },
  {
    name: '音量',
    icon: (
      <>
        <path d="M1 6h3l4-4v14l-4-4H1z" fill="#fff" />
        <circle cx="12" cy="12" r="5" fill="#d2444a" />
        <path d="M10 10l4 4M14 10l-4 4" stroke="#fff" strokeWidth="1.5" />
      </>
    ),
  },
]

function Taskbar() {
  return (
    <div className="flex h-10 items-center border-t border-[#75736f] bg-[#171615] bg-[radial-gradient(180px_80px_at_0%_50%,#4a4a60_0%,transparent_100%),radial-gradient(90px_26px_at_43%_90%,#262d5c_0%,transparent_100%),radial-gradient(110px_40px_at_50%_40%,#262d55_0%,transparent_100%),radial-gradient(80px_40px_at_57%_50%,#1f2852_0%,transparent_100%),radial-gradient(220px_60px_at_94%_60%,#4a3c3f_0%,transparent_100%)] shadow-[0_-1px_0_#111]">
      <button type="button" aria-label="开始" className="ml-2 mr-[14px]">
        <Svg size={38}>
          <circle cx="19" cy="19" r="18" fill="#215f8d" stroke="#9db9c9" />
          <path d="M3 24a16.500 16.500 0 0 0 32 0c-8 4-24 4-32 0z" fill="#22b4e8" />
          <path d="M5 14C9 1 29 1 33 14c-8 4-20 4-28 0z" fill="#7d9fb8" />
          <path d="M11 9c3-2 6-1 8 0l-2 9c-3-1.500-5-2-8 0z" fill="#e6572a" />
          <path d="M20.500 9.500c3 1.500 6 2 9 0l-2.500 9c-3 2-5.500 1.500-8.500 0z" fill="#8dc63a" />
          <path d="M8.500 19.500c3-2 5.500-1.500 8 0l-2 8.500c-3-1.500-5-1.500-8 0z" fill="#3c9be0" />
          <path d="M18 20c3 1.500 6 2 8.500 0l-2 8.500c-3 2-6 1.500-8.500 0z" fill="#fcc52c" />
        </Svg>
      </button>
      <div className="flex gap-[3px]">
        <TaskButton label="浏览器" className="w-[59px] from-[#8f8c93] via-[#a9a49d] to-[#c9c2a6]">
          <Svg size={32}>
            <circle cx="16" cy="17" r="13.5" fill="#f7f7f4" />
            <path d="M16 6a11 11 0 1 0 10.500 14h-6c-3 4-9 2-9-2H27C28 11 23 6 16 6zm-4.500 9c1-5 9-5 10 0z" fill="#55b52c" />
            <path d="M4 31C-1 22 12 2 30 2c-12 2-24 16-26 29z" fill="#6cc23c" />
          </Svg>
        </TaskButton>
        <TaskButton label="资源管理器" className="w-[59px] from-[#dcd8c9] via-[#8a8890] to-[#3f4668]">
          <Svg size={34} h={32}>
            <path d="M2 5h10l1 2h18v22H2z" fill="#f0d27e" />
            <path d="M5 2h6v4H5z" fill="#2fa84a" />
            <path d="M13 4h6v4h-6z" fill="#e03c31" />
            <path d="M21 6h6v4h-6z" fill="#2d86d8" />
            <path d="M2 9h29v18H2z" fill="#f8e6a6" stroke="#cfae5c" />
            <path d="M6 31V21c0-2 1-3 3-3h15c2 0 3 1 3 3v10h-5v-7H11v7z" fill="#8ccbe2" stroke="#5aa6c4" />
            <path d="M9 12v10M4 17h10" stroke="#fff" strokeWidth="1.5" />
          </Svg>
        </TaskButton>
        <div className="flex">
          <TaskButton label="Creo Parametric" className="w-[54px] from-[#d9d9d9] via-[#8e8e8e] to-[#c6c6c6]">
            <Svg size={31}>
              <path d="M.5.500h30v30H.5z" fill="#fff" stroke="#999" />
              <path d="M5.500 5.500h20v21h-20z" fill="#d6d6d6" stroke="#333" strokeWidth="1.5" />
              <path d="M12 6h13.500v13.500H12z" fill="#0a9ee6" stroke="#1c4d70" />
            </Svg>
          </TaskButton>
          <span className="h-[38px] w-[5px] rounded-r-[3px] border border-l-0 border-[#b9b7b2] bg-[#5a5a5a]" />
        </div>
        <TaskButton label="画图" className="w-[59px] from-[#63625f] via-[#2a2928] to-[#1f1e1d]">
          <Svg size={34} h={32}>
            <path d="M2 20C0 10 12 5 20 6s11 8 9 14-9 10-13 10c-4-1-1-5-4-6S3 26 2 20z" fill="#cfe4f2" stroke="#86aeca" />
            <circle cx="7" cy="19" r="2.8" fill="#dd4a3a" />
            <circle cx="12" cy="13" r="2.8" fill="#5cb947" />
            <circle cx="19" cy="11" r="2.8" fill="#f0c02c" />
            <circle cx="25" cy="21" r="2.5" fill="#3f8fd6" />
            <path d="M17 31l9-22" stroke="#e38a2e" strokeWidth="3" />
            <path d="M24 9c0-4 1-7 4-8l6 2c-1 4-4 6-8 8z" fill="#9c6b48" />
          </Svg>
        </TaskButton>
      </div>

      <div className="ml-auto flex h-full items-center">
        <button type="button" aria-label="键盘" className="mr-[14px]">
          <Svg>
            <path d="M2 7h14v8H2z" fill="#ddd" />
            <path d="M3 9.500h12M3 11.500h12" stroke="#444" strokeDasharray="1 1" />
            <path d="M5 13.500h8" stroke="#444" />
            <path d="M6 7c0-4 3-1 5-3 1-1 2-1 4-1" stroke="#ddd" />
          </Svg>
        </button>
        <div className="flex gap-1.5">
          {trayIcons.map((t) => (
            <button key={t.name} type="button" aria-label={t.name}>
              <Svg>{t.icon}</Svg>
            </button>
          ))}
        </div>
        <div className="ml-3.5 w-[60px] whitespace-nowrap text-center text-[12px] leading-[18px] text-white">
          <p>9:12</p>
          <p>2018/3/20</p>
        </div>
        <button
          type="button"
          aria-label="显示桌面"
          className="ml-2 h-[39px] w-3.5 border border-[#8d8787] bg-linear-to-b from-[#8b8484] to-[#4c4646]"
        />
      </div>
    </div>
  )
}

function ForumBadge() {
  return (
    <div className="pointer-events-none absolute bottom-[5px] right-[5px] flex h-[62px] w-[206px] items-center bg-white/35">
      <Svg size={60} h={62}>
        <g opacity="0.65">
          <path d="M32 8C18-2 0 6 4 22s22 24 36 14" stroke="#5d7f99" strokeWidth="3" />
          <path d="M46 22c14-5 16 9 6 20S38 60 32 52" stroke="#b3303c" strokeWidth="4" />
          <path d="M14 42c8-12 24-20 30-10s-2 14-6 16" stroke="#444" strokeWidth="2" />
          <path d="M22 32c12-2 22 4 28 14" stroke="#444" strokeWidth="2" />
        </g>
      </Svg>
      <div className="flex h-full flex-1 flex-col items-center justify-between">
        <span className="whitespace-nowrap text-[29px] font-bold leading-[38px] text-[#58a378]/80">野火论坛</span>
        <span className="whitespace-nowrap text-[14px] leading-6 text-[#47635f]/60">www.proewildfire.cn</span>
      </div>
    </div>
  )
}

export default function App() {
  return (
    <div className="relative flex min-h-screen flex-col overflow-hidden bg-[#e4e4e4] font-['Open_Sans','Noto_Sans_CJK_SC',sans-serif]">
      <TitleBar />
      <TabRow />
      <Ribbon />
      <SketchCanvas />
      <StatusBar />
      <Taskbar />
      <ForumBadge />
    </div>
  )
}
